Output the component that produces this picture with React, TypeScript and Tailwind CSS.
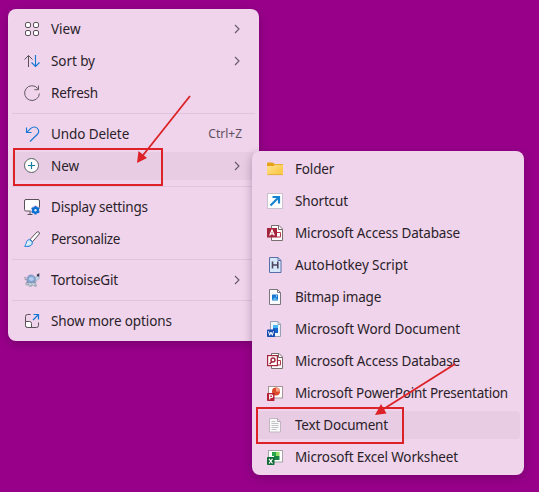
import React from "react";

type IconFn = () => React.ReactElement;

const Svg = ({ children }: { children: React.ReactNode }) => (
  <svg width="16" height="16" viewBox="0 0 16 16" fill="none" className="shrink-0 overflow-visible">
    {children}
  </svg>
);

const ViewIcon: IconFn = () => (
  <Svg>
    <g stroke="#5a5058" strokeWidth="1" fill="#fff">
      <rect x="1.5" y="1.5" width="5" height="5" rx="1.5" />
      <rect x="9.5" y="1.5" width="5" height="5" rx="1.5" />
      <rect x="1.5" y="9.5" width="5" height="5" rx="1.5" />
      <rect x="9.5" y="9.5" width="5" height="5" rx="1.5" />
    </g>
  </Svg>
);
const SortIcon: IconFn = () => (
  <Svg>
    <path d="M4.5 14V2.5M0.5 6.5l4-4 4 4" stroke="#5a5058" />
    <path d="M11.5 2v11.5M7.5 9.5l4 4 4-4" stroke="#1377d4" strokeWidth="1.1" />
  </Svg>
);
const RefreshIcon: IconFn = () => (
  <Svg>
    <path d="M15.4 8.5A7.4 7.4 0 1 1 13.8 3.5L14.5 4.5M14.5 0.5v4.2h-4.2" stroke="#655a62" />
  </Svg>
);
const UndoIcon: IconFn = () => (
  <Svg>
    <path d="M2.5 1.5v5h5M2.7 6.3L6.5 2.7C9 .4 12 .7 13.5 2.5c1.7 2 1.4 4.3-.3 6L6 15.5" stroke="#1377d4" strokeWidth="1.1" />
  </Svg>
);
const NewIcon: IconFn = () => (
  <Svg>
    <circle cx="7.5" cy="7.5" r="7" fill="#fff" stroke="#5a6063" />
    <path d="M7.5 4v7M4 7.5h7" stroke="#137da0" strokeWidth="1.2" />
  </Svg>
);
const DisplayIcon: IconFn = () => (
  <Svg>
    <rect x="0.5" y="0.5" width="15" height="11.5" rx="1.5" fill="#fff" stroke="#5a5058" />
    <path d="M3.5 15.5h5M6 12.5V15.5" stroke="#5a5058" />
    <circle cx="11.5" cy="11.2" r="4.9" fill="#efd4eb" />
    <circle cx="11.5" cy="11.2" r="3.5" fill="#0b6fd0" />
    <path d="M11.5 6.9v8.6M7.7 9l7.6 4.4M7.7 13.4L15.3 9" stroke="#0b6fd0" strokeWidth="1.9" />
    <circle cx="11.5" cy="11.2" r="1.2" fill="#d7e6f8" />
  </Svg>
);
const BrushIcon: IconFn = () => (
  <Svg>
    <path d="M6 8.5L13 1c1-1 3.2.5 2.2 2L8.5 10.8z" fill="#fff" stroke="#5a5058" />
    <path d="M5.8 8.7c-2-.2-3.3 1.2-3.5 3-.1 1.5-.7 2.5-1.8 3.5 3 .6 6.5.3 7.5-2 .4-1 .4-1.8 0-2.7z" fill="#cfeaff" stroke="#1377d4" />
    <path d="M2.5 13.5l3-2" stroke="#fff" />
  </Svg>
);
const TortoiseIcon: IconFn = () => (
  <Svg>
    <path d="M10 9l1.500-4 2-1.200 1.500.700.300 2-1.500 1.200-1.500 1.300-1 1.500z" fill="#bfd2e6" stroke="#8592a6" strokeWidth=".5" />
    <path d="M3 9.500L1.500 12l1 1.200 2-.7.7 1.800h2.300l.5-1.500 1.500.5.7.9h2.300l-.7-2.200-.3-2z" fill="#b4c3d2" stroke="#788593" strokeWidth=".5" />
    <path d="M3 9C2.500 4.500 5 2.800 7.300 3c2.500.100 4.200 2 4.200 5.500L9 10.500H5z" fill="#86a3d3" stroke="#7487ab" strokeWidth=".6" />
    <path d="M5 6l2.500-1.300L9.700 6v2l-2.200 1L5 8z" fill="#b3caea" />
    <path d="M.2 5.800h2M.8 7.600h1.700M2.500 10l1.800.800M9.500 10.500l1.500-.7" stroke="#7c818c" strokeWidth=".9" />
    <path d="M12.800 2.500L15.300 1.200v3.300l-2.300-.3z" fill="#353a4e" />
    <path d="M5.500 11.500l1 1M8.500 11.500l1 1" stroke="#e4eef8" strokeWidth=".9" />
  </Svg>
);
const MoreIcon: IconFn = () => (
  <Svg>
    <path d="M6.5 1.5h-3a2 2 0 0 0-2 2v9a2 2 0 0 0 2 2h9a2 2 0 0 0 2-2v-3" stroke="#5a5058" />
    <path d="M1.5 8.5h4a2 2 0 0 1 2 2v4h-4a2 2 0 0 1-2-2z" fill="#fff" stroke="#5a5058" />
    <path d="M9 7l5.5-5.5M9.5 1.5h5v5" stroke="#1377d4" strokeWidth="1.2" />
  </Svg>
);
const FolderIcon: IconFn = () => (
  <Svg>
    <path d="M0 2.5a1 1 0 0 1 1-1h4.5L7.5 3H15a1 1 0 0 1 1 1v4H0z" fill="#e6a31a" />
    <path d="M0 5h6.5L8 3.7h7.2a.8.8 0 0 1 .8.8V13a1 1 0 0 1-1 1H1a1 1 0 0 1-1-1z" fill="url(#folderFace)" />
    <path d="M.5 13.6h15" stroke="#dda637" strokeWidth=".8" />
    <defs>
      <linearGradient id="folderFace" x1="0" y1="3" x2="8" y2="14" gradientUnits="userSpaceOnUse">
        <stop stopColor="#ffe395" />
        <stop offset="1" stopColor="#fbcb4e" />
      </linearGradient>
    </defs>
  </Svg>
);
const ShortcutIcon: IconFn = () => (
  <Svg>
    <rect x=".5" y=".5" width="15" height="15" fill="#fff" stroke="#c9c3cd" />
    <path d="M3.5 12.5l8-8M5.5 4h6.5v6.5" stroke="#1683d2" strokeWidth="2.2" />
  </Svg>
);
const Page = () => <path d="M4.5.5h7.5l3.5 3.5v11.5h-11z" fill="#fff" stroke="#77706f" />;
const AccessIcon: IconFn = () => (
  <Svg>
    <Page />
    <path d="M11.5.5V4.5h4" stroke="#77706f" />
    <path d="M10 7.5h3.5v4.5H10" stroke="#b5394c" />
    <rect x="0" y="3" width="10" height="9.5" fill="#a4243b" />
    <path d="M2.7 10.5L5 5l2.3 5.5M3.5 8.8h3" stroke="#fff" strokeWidth="1.2" />
  </Svg>
);
const AhkIcon: IconFn = () => (
  <Svg>
    <path d="M2.5.5h8.5l3 3v12H2.5z" fill="#d7e7fa" stroke="#5a6fa8" />
    <path d="M11 .5v3h3" stroke="#5a6fa8" />
    <path d="M5.5 4.5v7M10.8 4.5v7M5.5 8h5.3" stroke="#4b4660" strokeWidth="1.6" />
  </Svg>
);
const BitmapIcon: IconFn = () => (
  <Svg>
    <path d="M2.5.5h8l3 3v12h-11z" fill="#fbfcfd" stroke="#77777b" />
    <path d="M10.5.5v3h3" stroke="#77777b" />
    <rect x="5" y="5.5" width="6" height="6" rx=".5" fill="#1677d0" />
    <path d="M5 11l3-3 3 3z" fill="#55b4ee" />
    <circle cx="9.5" cy="7" r=".7" fill="#d5efff" />
  </Svg>
);
const WordIcon: IconFn = () => (
  <Svg>
    <path d="M3.5.5h7.5l2.5 2.5v12.5h-10z" fill="#edf4fc" stroke="#96a2b2" />
    <path d="M11 .5v3h2.5" stroke="#96a2b2" />
    <path d="M6 4h5v3H6z" fill="#43b8f2" />
    <path d="M6 7h5v5H6z" fill="#1764cb" />
    <rect x="0" y="8.5" width="8" height="7.5" rx=".8" fill="#174db1" />
    <path d="M1.5 10.3l1.2 4L4 11l1.3 3.3 1.2-4" stroke="#fff" strokeWidth="1" />
  </Svg>
);
const AccessOldIcon: IconFn = () => (
  <Svg>
    <Page />
    <path d="M11.5.5V4.5h4" stroke="#77706f" />
    <path d="M10 7.5h3.5v4.5H10" stroke="#b5394c" />
    <rect x=".6" y="2.6" width="9.8" height="10" fill="#fff" stroke="#a4243b" strokeWidth="1.2" />
    <path d="M2.7 11l2-2.2" stroke="#a4243b" strokeWidth="1.5" />
    <circle cx="6" cy="7" r="2" stroke="#a4243b" strokeWidth="1.4" />
  </Svg>
);
const PowerPointIcon: IconFn = () => (
  <Svg>
    <rect x="1.5" y="1.5" width="14" height="11.5" fill="#fff" stroke="#a29796" />
    <circle cx="9" cy="6.5" r="4" fill="#dc4b2c" />
    <path d="M9 6.5v-4a4 4 0 0 1 4 4z" fill="#f8a184" />
    <rect x="0" y="8" width="7.5" height="8" rx=".8" fill="#b51e33" />
    <path d="M2.7 14.5V9.8h1.5c2 0 2 2.7 0 2.7H2.7" stroke="#fff" strokeWidth="1.2" />
  </Svg>
);
const TextIcon: IconFn = () => (
  <Svg>
    <path d="M2.5 1.5h8l3 3v10.5h-11z" fill="#fbfafb" stroke="#c2b7c0" />
    <path d="M10.5 1.5v3h3" stroke="#b3a9b1" />
    <path d="M4.5 4.5h4M4.5 6.5h7M4.5 8.5h7M4.5 10.5h7M4.5 12.5h5" stroke="#b3b5b9" strokeWidth=".8" />
  </Svg>
);
const ExcelIcon: IconFn = () => (
  <Svg>
    <rect x="1.5" y="1.5" width="14" height="11.5" fill="#fff" stroke="#a3a8a4" />
    <path d="M5 3h4v4H5z" fill="#27a650" />
    <path d="M9 3h3.5v4H9z" fill="#8dde60" />
    <path d="M7 7h5.5v4H7z" fill="#168141" />
    <rect x="0" y="8" width="7.5" height="8" rx=".8" fill="#126b37" />
    <path d="M2 9.8l3.5 4.7M5.5 9.8L2 14.5" stroke="#fff" strokeWidth="1.2" />
  </Svg>
);

type Item = { label: string; icon: IconFn; spacing: string; sub?: boolean; keys?: string; active?: boolean };

const groups: Item[][] = [
  [
    { label: "View", icon: ViewIcon, spacing: "tracking-[0px]", sub: true },
    { label: "Sort by", icon: SortIcon, spacing: "tracking-[-0.08px]", sub: true },
    { label: "Refresh", icon: RefreshIcon, spacing: "tracking-[-0.2px]" },
  ],
  [
    { label: "Undo Delete", icon: UndoIcon, spacing: "tracking-[-0.1px]", keys: "Ctrl+Z" },
    { label: "New", icon: NewIcon, spacing: "tracking-[0px]", sub: true, active: true },
  ],
  [
    { label: "Display settings", icon: DisplayIcon, spacing: "tracking-[-0.2px]" },
    { label: "Personalize", icon: BrushIcon, spacing: "tracking-[-0.34px]" },
  ],
  [{ label: "TortoiseGit", icon: TortoiseIcon, spacing: "tracking-[-0.2px]", sub: true }],
  [{ label: "Show more options", icon: MoreIcon, spacing: "tracking-[-0.12px]" }],
];

const newItems: Item[] = [
  { label: "Folder", icon: FolderIcon, spacing: "tracking-[-0.15px]" },
  { label: "Shortcut", icon: ShortcutIcon, spacing: "tracking-[-0.15px]" },
  { label: "Microsoft Access Database", icon: AccessIcon, spacing: "tracking-[-0.15px]" },
  { label: "AutoHotkey Script", icon: AhkIcon, spacing: "tracking-[-0.08px]" },
  { label: "Bitmap image", icon: BitmapIcon, spacing: "tracking-[-0.22px]" },
  { label: "Microsoft Word Document", icon: WordIcon, spacing: "tracking-[-0.1px]" },
  { label: "Microsoft Access Database", icon: AccessOldIcon, spacing: "tracking-[-0.15px]" },
  { label: "Microsoft PowerPoint Presentation", icon: PowerPointIcon, spacing: "tracking-[-0.23px]" },
  { label: "Text Document", icon: TextIcon, spacing: "tracking-[-0.22px]", active: true },
  { label: "Microsoft Excel Worksheet", icon: ExcelIcon, spacing: "tracking-[-0.16px]" },
];

function Row({ item, className }: { item: Item; className: string }) {
  const Icon = item.icon;
  return (
    <div className="px-1 py-0.5">
      <div className={`flex h-7 items-center rounded ${item.active ? "bg-[#e7cce3]" : ""} ${className}`}>
        <Icon />
        <span className={`whitespace-nowrap ${item.spacing}`}>{item.label}</span>
        {item.keys && <span className="mr-px ml-auto text-[12px] text-[#5e505d]">{item.keys}</span>}
        {item.sub && (
          <svg width="6" height="10" viewBox="0 0 6 10" fill="none" className="mr-[3px] ml-auto">
            <path d="M1 1l4 4-4 4" stroke="#665965" strokeWidth="1.1" />
          </svg>
        )}
      </div>
    </div>
  );
}

export default function App() {
  return (
    <div className="relative h-[492px] w-[539px] overflow-hidden bg-[#98008a] font-['Noto_Sans','Open_Sans',sans-serif] text-[13.5px] leading-5 text-[#2b1e2a]">
      <div className="absolute top-[9px] left-2 w-[251px] rounded-lg bg-[#efd4eb] py-1 shadow-[0_3px_10px_rgba(50,0,45,0.3)]">
        {groups.map((group, i) => (
          <div key={i}>
            {i > 0 && (
              <div className="px-1 py-1">
                <div className="h-px bg-[#dfc4dc]" />
              </div>
            )}
            {group.map((item) => (
              <Row key={item.label} item={item} className="gap-[11px] px-3" />
            ))}
          </div>
        ))}
      </div>
      <div className="absolute top-[151px] left-[252px] w-[272px] rounded-lg bg-[#efd4eb] py-0.5 shadow-[0_3px_10px_rgba(50,0,45,0.3)]">
        {newItems.map((item, i) => (
          <Row key={i} item={item} className="gap-3 pl-[11px]" />
        ))}
      </div>
      <div className="absolute top-[148px] left-[13px] h-[38px] w-[150px] border-2 border-[#dc2226]" />
      <div className="absolute top-[407px] left-[256px] h-[37px] w-[148px] border-2 border-[#dc2226]" />
      <svg className="absolute inset-0" width="539" height="492" viewBox="0 0 539 492">
        <g stroke="#dc2226" strokeWidth="1.8" fill="#dc2226">
          <path d="M190 96L142 156.5" />
          <path d="M455 364L382 410" />
          <path d="M137 163l1.5-12 8.500 7z" stroke="none" />
          <path d="M375 415l6-11 5.500 9.500z" stroke="none" />
        </g>
      </svg>
    </div>
  );
}
